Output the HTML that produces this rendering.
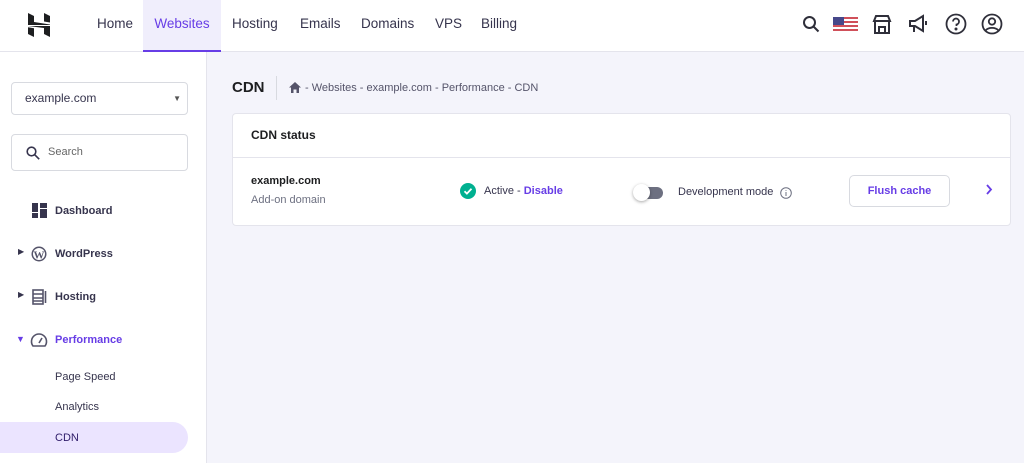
<!DOCTYPE html>
<html><head><style>
*{box-sizing:border-box;margin:0;padding:0}
body{width:1024px;height:463px;overflow:hidden;font-family:"Liberation Sans",sans-serif;background:#f4f4fb;color:#2f1c6a;position:relative}
.top{position:absolute;left:0;top:0;width:1024px;height:52px;background:#fff;border-bottom:1px solid #e4e4ec}
.nav{position:absolute;top:0;height:52px;line-height:48px;font-size:13.5px;color:#36344d}
.side{position:absolute;left:0;top:52px;width:207px;height:411px;background:#fff;border-right:1px solid #e4e4ec}
.box{position:absolute;border:1px solid #d8dae0;border-radius:4px;background:#fff;font-size:12px;color:#36344d}
.it{position:absolute;font-size:11px;font-weight:bold;color:#36344d}
.sub{position:absolute;left:55px;font-size:11px;color:#36344d}
.card{position:absolute;left:232px;top:113px;width:779px;height:113px;background:#fff;border:1px solid #e4e4ec;border-radius:4px}
</style></head><body>
<div class="top">
<svg style="position:absolute;left:28px;top:13px" width="22" height="24" viewBox="0 0 22 24" fill="#1d1e20"><path d="M0 0L6 3V9L22 11.5V12H0Z"/><path d="M16 0L22 3V9.5L16 8.5Z"/><path d="M22 24L16 21V15L0 13V13H22Z"/><path d="M0 14.2L6 15.2V24L0 21Z"/></svg>
<div class="nav" style="left:97px">Home</div>
<div class="nav" style="left:143px;width:78px;background:#f0eefc;color:#673de6;text-align:center;border-bottom:2px solid #673de6">Websites</div>
<div class="nav" style="left:232px">Hosting</div>
<div class="nav" style="left:300px">Emails</div>
<div class="nav" style="left:361px">Domains</div>
<div class="nav" style="left:435px">VPS</div>
<div class="nav" style="left:481px">Billing</div>
<svg style="position:absolute;left:802px;top:15px" width="18" height="18" viewBox="0 0 18 18" fill="none" stroke="#2f2f3a" stroke-width="2"><circle cx="7.5" cy="7.5" r="5.5"/><path d="M11.5 11.5l5 5"/></svg>
<svg style="position:absolute;left:833px;top:17px" width="25" height="16" viewBox="0 0 25 16"><rect width="25" height="16" fill="#fff"/><g fill="#d0505a"><rect y="0" width="25" height="2"/><rect y="4" width="25" height="2"/><rect y="8" width="25" height="2"/><rect y="12" width="25" height="2"/></g><rect width="11" height="8" fill="#46488a"/></svg>
<svg style="position:absolute;left:872px;top:15px" width="20" height="19" viewBox="0 0 20 19" fill="none" stroke="#2f2f3a" stroke-width="2"><path d="M2 6l2-5h12l2 5zM3 6v12h14V6M7 18v-6h6v6"/></svg>
<svg style="position:absolute;left:908px;top:14px" width="22" height="20" viewBox="0 0 22 20" fill="none" stroke="#2f2f3a" stroke-width="2"><path d="M2 7h5l8-5v15l-8-5H2zM6 12v6M18 7v4"/></svg>
<svg style="position:absolute;left:945px;top:13px" width="22" height="22" viewBox="0 0 22 22" fill="none" stroke="#2f2f3a" stroke-width="1.8"><circle cx="11" cy="11" r="9.5"/><path d="M8 8.5a3 3 0 1 1 3.5 3V13"/><circle cx="11" cy="16" r=".6" fill="#2f2f3a"/></svg>
<svg style="position:absolute;left:981px;top:13px" width="22" height="22" viewBox="0 0 22 22" fill="none" stroke="#2f2f3a" stroke-width="1.8"><circle cx="11" cy="11" r="9.5"/><circle cx="11" cy="8.5" r="3.2"/><path d="M4.5 17.5c3-3.5 10-3.5 13 0"/></svg>
</div>
<div class="side">
<div class="box" style="left:11px;top:30px;width:177px;height:33px;line-height:31px;padding-left:13px">example.com<span style="position:absolute;right:6px;top:0;font-size:8px;color:#555">▼</span></div>
<div class="box" style="left:11px;top:82px;width:177px;height:37px;line-height:35px;padding-left:36px;color:#666;font-size:11px">Search
<svg style="position:absolute;left:14px;top:11px" width="14" height="14" viewBox="0 0 14 14" fill="none" stroke="#36344d" stroke-width="1.6"><circle cx="5.5" cy="5.5" r="4.3"/><path d="M8.7 8.7l4.5 4.5"/></svg></div>
<svg style="position:absolute;left:32px;top:151px" width="15" height="15" viewBox="0 0 15 15" fill="#36344d"><rect width="6" height="9"/><rect y="10" width="6" height="5"/><rect x="8" width="7" height="5"/><rect x="8" y="6" width="7" height="9"/></svg>
<div class="it" style="left:55px;top:153px">Dashboard</div>
<div style="position:absolute;left:18px;top:195px;font-size:8px;color:#36344d">▶</div>
<svg style="position:absolute;left:31px;top:194px" width="16" height="16" viewBox="0 0 16 16"><circle cx="8" cy="8" r="7.5" fill="#55546a"/><circle cx="8" cy="8" r="6" fill="#fff"/><text x="8" y="12.5" font-size="11" font-weight="bold" font-family="Liberation Serif" text-anchor="middle" fill="#55546a">W</text></svg>
<div class="it" style="left:55px;top:196px">WordPress</div>
<div style="position:absolute;left:18px;top:238px;font-size:8px;color:#36344d">▶</div>
<svg style="position:absolute;left:32px;top:237px" width="15" height="16" viewBox="0 0 15 16" fill="none" stroke="#55546a" stroke-width="1.6"><rect x="1" y="1" width="10" height="14"/><path d="M1 5h10M1 9h10M1 12h10M13.5 2v12"/></svg>
<div class="it" style="left:55px;top:239px">Hosting</div>
<div style="position:absolute;left:16px;top:282px;font-size:9px;color:#673de6">▼</div>
<svg style="position:absolute;left:30px;top:280px" width="18" height="15" viewBox="0 0 18 15" fill="none" stroke="#55546a" stroke-width="1.6"><path d="M3 14A7.5 7.5 0 1 1 15 14z"/><path d="M9 11l3-5"/></svg>
<div class="it" style="left:55px;top:282px;color:#673de6">Performance</div>
<div class="sub" style="top:319px">Page Speed</div>
<div class="sub" style="top:349px">Analytics</div>
<div style="position:absolute;left:0;top:370px;width:188px;height:31px;background:#ebe4ff;border-radius:0 16px 16px 0"></div>
<div class="sub" style="top:380px;color:#2f1c6a">CDN</div>
</div>
<div style="position:absolute;left:232px;top:79px;font-size:15px;font-weight:bold;color:#1d1e20">CDN</div>
<div style="position:absolute;left:276px;top:76px;width:1px;height:24px;background:#d8dae0"></div>
<svg style="position:absolute;left:289px;top:82px" width="12" height="11" viewBox="0 0 12 11" fill="#55546a"><path d="M6 0l6 5.5h-2V11H7.5V7.5h-3V11H2V5.5H0z"/></svg>
<div style="position:absolute;left:305px;top:82px;font-size:11px;color:#55546a">- Websites - example.com - Performance - CDN</div>
<div class="card">
<div style="position:absolute;left:18px;top:14px;font-size:12px;font-weight:bold;color:#1d1e20">CDN status</div>
<div style="position:absolute;left:0;top:43px;width:777px;height:1px;background:#e4e4ec"></div>
<div style="position:absolute;left:18px;top:61px;font-size:11px;font-weight:bold;color:#1d1e20">example.com</div>
<div style="position:absolute;left:18px;top:80px;font-size:11px;color:#6d7081">Add-on domain</div>
<svg style="position:absolute;left:227px;top:69px" width="16" height="16" viewBox="0 0 16 16"><circle cx="8" cy="8" r="8" fill="#00b090"/><path d="M4.5 8.2l2.4 2.4 4.6-4.8" stroke="#fff" stroke-width="1.8" fill="none"/></svg>
<div style="position:absolute;left:251px;top:71px;font-size:11px;color:#36344d">Active - <b style="color:#673de6">Disable</b></div>
<div style="position:absolute;left:402px;top:73px;width:28px;height:12px;border-radius:6px;background:#6d7081"></div>
<div style="position:absolute;left:400px;top:70px;width:17px;height:17px;border-radius:50%;background:#fff;box-shadow:0 1px 3px rgba(0,0,0,.35)"></div>
<div style="position:absolute;left:445px;top:72px;font-size:11px;color:#36344d">Development mode</div>
<svg style="position:absolute;left:547px;top:73px" width="12" height="12" viewBox="0 0 12 12" fill="none" stroke="#6d7081"><circle cx="6" cy="6" r="5.3"/><path d="M6 5v4M6 3v.8"/></svg>
<div style="position:absolute;left:616px;top:61px;width:101px;height:32px;border:1px solid #d8dae0;border-radius:5px;text-align:center;line-height:30px;font-size:11px;font-weight:bold;color:#673de6">Flush cache</div>
<svg style="position:absolute;left:752px;top:70px" width="8" height="11" viewBox="0 0 8 11" fill="none" stroke="#673de6" stroke-width="1.8"><path d="M2 1l4 4.5L2 10"/></svg>
</div>
</body></html>
